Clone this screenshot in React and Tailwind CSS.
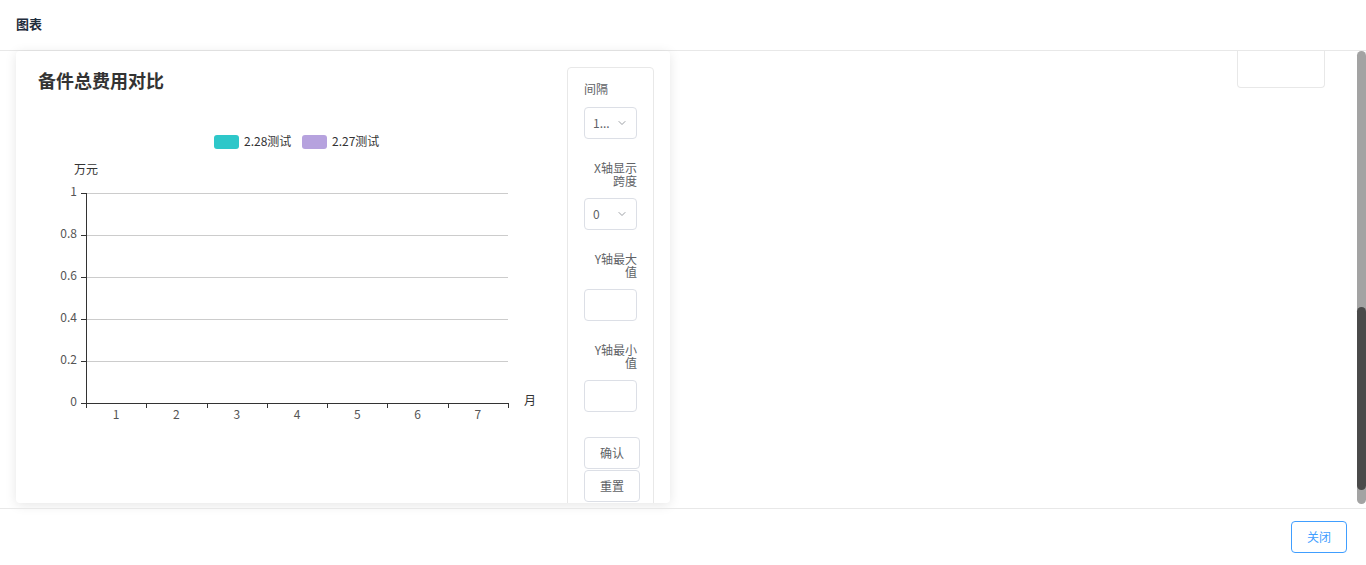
import React from 'react';
import { ChevronDown } from 'lucide-react';

const font = { fontFamily: '"Noto Sans CJK SC", "Noto Sans", sans-serif' };

const yTicks = [
  { v: '1', y: 93 },
  { v: '0.8', y: 135 },
  { v: '0.6', y: 177 },
  { v: '0.4', y: 219 },
  { v: '0.2', y: 261 },
  { v: '0', y: 303 },
];

const step = 422 / 7;

const Chart = () => (
  <svg width="551" height="330" className="block mt-[8px]" style={font}>
    {/* 图例 */}
    <rect x="198" y="35" width="25" height="14" rx="3" fill="#2ec7c9" />
    <text x="228" y="43" fontSize="12" fill="#333" dominantBaseline="middle">2.28测试</text>
    <rect x="286" y="35" width="25" height="14" rx="3" fill="#b6a2de" />
    <text x="316" y="43" fontSize="12" fill="#333" dominantBaseline="middle">2.27测试</text>

    <text x="58" y="71" fontSize="12" fill="#333" dominantBaseline="middle">万元</text>

    {yTicks.map((t) => (
      <g key={t.v}>
        {t.v !== '0' && <line x1="70" x2="492" y1={t.y + 0.5} y2={t.y + 0.5} stroke="#cccccc" />}
        <line x1="65" x2="70" y1={t.y + 0.5} y2={t.y + 0.5} stroke="#333" />
        <text x="61" y={t.y} fontSize="12" fill="#555" textAnchor="end" dominantBaseline="middle">{t.v}</text>
      </g>
    ))}

    {/* 轴线 */}
    <line x1="70.5" x2="70.5" y1="93" y2="303" stroke="#333" />
    <line x1="70" x2="492.5" y1="303.5" y2="303.5" stroke="#333" />

    {Array.from({ length: 8 }).map((_, i) => {
      const x = Math.round(70 + i * step) + 0.5;
      return <line key={i} x1={x} x2={x} y1="303" y2="308" stroke="#333" />;
    })}
    {Array.from({ length: 7 }).map((_, i) => (
      <text key={i} x={70 + i * step + step / 2} y="316" fontSize="12" fill="#555" textAnchor="middle" dominantBaseline="middle">{i + 1}</text>
    ))}
    <text x="508" y="302" fontSize="12" fill="#333" dominantBaseline="middle">月</text>
  </svg>
);

const SelectBox = ({ value }) => (
  <div className="mt-[11px] w-[53px] h-[32px] border border-[#dcdfe6] rounded-[4px] flex items-center pl-[8px] pr-[8px] justify-between">
    <span className="text-[12px] text-[#606266] leading-none">{value}</span>
    <ChevronDown size={12} color="#909399" strokeWidth={1.8} />
  </div>
);

const InputBox = () => (
  <div className="mt-[11px] w-[53px] h-[32px] border border-[#dcdfe6] rounded-[4px] bg-white" />
);

const Label = ({ children }) => (
  <div className="mt-[22px] w-[53px] text-right text-[12px] leading-[13px] text-[#606266] break-all">{children}</div>
);

const App = () => {
  return (
    <div className="w-[1366px] h-[565px] bg-white flex flex-col overflow-hidden" style={font}>
      {/* 头部 */}
      <header className="h-[51px] shrink-0 border-b border-[#e8e8e8] flex items-center px-[16px] pb-[3px]">
        <span className="text-[13px] font-bold text-[#1f2d3d] leading-none">图表</span>
      </header>

      {/* 内容 */}
      <div className="h-[457px] shrink-0 flex">
        <div className="ml-[16px] w-[654px] h-[452px] bg-white rounded-[4px] shadow-[0_2px_12px_0_rgba(0,0,0,0.1)] overflow-hidden flex">
          <div className="w-[551px] flex flex-col">
            <h2 className="pl-[22px] pt-[17px] text-[18px] leading-[24px] font-bold text-[#333]">备件总费用对比</h2>
            <Chart />
          </div>
          <div className="mt-[16px] w-[87px] h-[460px] border border-[#e8e8e8] rounded-[4px] pl-[16px] pt-[14px] flex flex-col">
            <div className="text-[12px] leading-[14px] text-[#606266]">间隔</div>
            <SelectBox value="1..." />
            <Label>X轴显示跨度</Label>
            <SelectBox value="0" />
            <Label>Y轴最大值</Label>
            <InputBox />
            <Label>Y轴最小值</Label>
            <InputBox />
            <button className="mt-[25px] w-[56px] h-[32px] border border-[#dcdfe6] rounded-[4px] text-[12px] text-[#606266] bg-white">确认</button>
            <button className="mt-[1px] w-[56px] h-[32px] border border-[#dcdfe6] rounded-[4px] text-[12px] text-[#606266] bg-white">重置</button>
          </div>
        </div>

        <div className="ml-auto mr-[32px] w-[88px] h-[37px] border border-t-0 border-[#e8e8e8] rounded-b-[4px]" />

        {/* 滚动条 */}
        <div className="w-[9px] h-[453px] bg-[#a3a3a3] rounded-full flex flex-col">
          <div className="mt-[256px] h-[183px] bg-[#4a4a4a] rounded-full" />
        </div>
      </div>

      {/* 底部 */}
      <footer className="flex-1 border-t border-[#e8e8e8] flex items-center justify-end pr-[19px]">
        <button className="w-[56px] h-[32px] border border-[#409eff] rounded-[4px] text-[12px] text-[#409eff] bg-white">关闭</button>
      </footer>
    </div>
  );
};

export default App;
